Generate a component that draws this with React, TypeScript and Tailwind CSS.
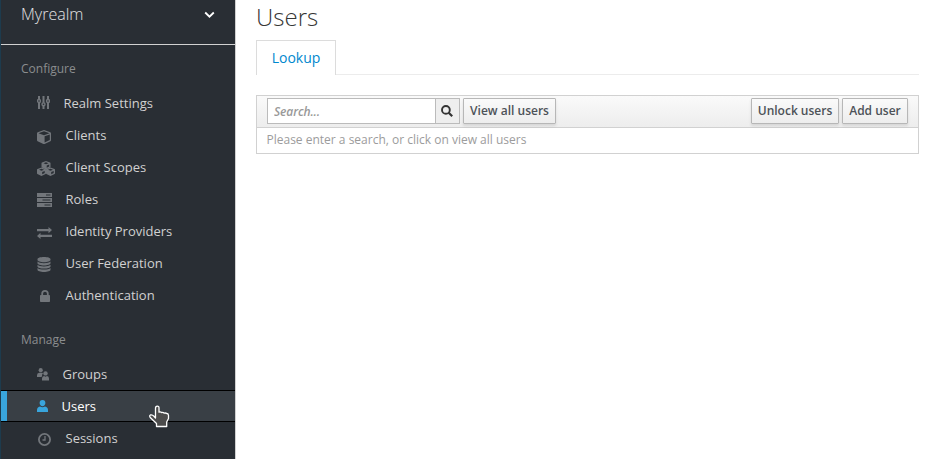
import type { ReactNode } from "react";

type Item = { label: string; icon: ReactNode; gap: string; active?: boolean };

const Icon = ({ w, h, className = "", children }: { w: number; h: number; className?: string; children: ReactNode }) => (
  <svg width={w} height={h} viewBox={`0 0 ${w} ${h}`} fill="currentColor" className={`shrink-0 ${className}`}>
    {children}
  </svg>
);

const Sliders = () => (
  <Icon w={13} h={13} className="mb-px">
    <g fill="none" stroke="currentColor" strokeWidth="1.4">
      <path d="M2 0v3M2 7v6M6.5 0v6M6.5 10v3M11 0v3M11 7v6" strokeWidth="2" />
      <circle cx="2" cy="5" r="1.500" />
      <circle cx="6.500" cy="8.300" r="1.500" />
      <circle cx="11" cy="5" r="1.500" />
    </g>
  </Icon>
);

const Cube = () => (
  <Icon w={14} h={14} className="mt-1">
    <path fillRule="evenodd" d="M7 0l6.3 2.3q.7.3.7 1v6.900q0 .6-.6 1L7.600 13.900q-.6.2-1.200 0L.6 11.200Q0 10.800 0 10.200V3.300q0-.7.7-1zM7 1.200L1.500 3.200 7 5.200l5.500-2zM7.600 6.300v6.200l5.200-2.600V4.400z" />
  </Icon>
);

const SmallCube = ({ x, y }: { x: number; y: number }) => (
  <path
    transform={`translate(${x} ${y})`}
    fillRule="evenodd"
    d="M4.500 0L8.500 1.600q.5.2.5.700v3.500q0 .5-.4.700L5 8.300q-.5.2-1 0L.4 6.500Q0 6.300 0 5.800V2.300q0-.5.5-.7zM4.500 1.200L2 2.200l2.500 1 2.500-1zM5.200 4.500v2.300l2.500-1.300V3.400z"
  />
);

const Cubes = () => (
  <Icon w={18} h={15} className="mt-0.5">
    <SmallCube x={4.5} y={0} />
    <SmallCube x={0} y={6.5} />
    <SmallCube x={9} y={6.5} />
  </Icon>
);

const Server = () => (
  <Icon w={15} h={14} className="mt-0.5">
    <path fillRule="evenodd" d="M0 0h15v4H0zM9 1.500v1h4.500v-1zM0 5h15v4H0zM5.500 6.500v1h8v-1zM0 10h15v4H0zM7.500 11.500v1h6v-1z" />
  </Icon>
);

const Exchange = () => (
  <Icon w={15} h={12} className="mt-1">
    <path d="M0 2h11.500V0L15 3.100 11.500 6.200V4.200H0zM15 7.800H3.500v-2L0 8.900 3.500 12v-2H15z" />
  </Icon>
);

const Database = () => (
  <Icon w={14} h={15} className="mt-0.5">
    <path d="M7 0c3.600 0 6.500.9 6.500 2.100v.9C13.500 4.200 10.600 5.200 7 5.200S.5 4.200.5 3v-.9C.5.900 3.400 0 7 0zM.5 4.500C1.700 5.700 4 6.200 7 6.200s5.300-.5 6.500-1.700v1.700C13.500 7.400 10.600 8.400 7 8.400S.5 7.400.5 6.200zM.5 7.700C1.700 8.900 4 9.400 7 9.400s5.300-.5 6.500-1.700v1.700c0 1.200-2.900 2.200-6.500 2.200S.5 10.600.5 9.400zM.5 10.900c1.200 1.200 3.500 1.700 6.500 1.700s5.300-.5 6.500-1.700v1.900C13.500 14.100 10.600 15 7 15S.5 14.100.5 12.800z" />
  </Icon>
);

const Lock = () => (
  <Icon w={10} h={12} className="mt-0.5 ml-[3px]">
    <path fillRule="evenodd" d="M1.300 5V3.500a3.700 3.500 0 0 1 7.400 0V5h.5q.8 0 .8.8v5.400q0 .8-.8.8H.8Q0 12 0 11.200V5.800Q0 5 .8 5zM3.100 5h3.800V3.500a1.900 1.800 0 0 0-3.800 0z" />
  </Icon>
);

const Groups = () => (
  <Icon w={12} h={13}>
    <circle cx="3.700" cy="2.200" r="2.100" />
    <path d="M0 9V7.200Q0 5 2.200 4.800h3L6 5.500Q4.600 6.800 5.100 8.200L4.300 9z" />
    <circle cx="8.500" cy="5.400" r="2.200" />
    <path d="M5 12.500v-2q0-2.200 2.100-2.500l1.400.8L10 8q2 .3 2 2.500v2z" />
  </Icon>
);

const User = () => (
  <Icon w={11} h={12} className="text-[#39a5dc]">
    <path d="M5.500 0a2.900 3 0 0 1 2.900 3C8.400 4.800 7 6.200 5.500 6.200S2.600 4.800 2.600 3A2.900 3 0 0 1 5.500 0zM0 12v-2q0-2.900 3-3.500 2.500 1.400 5 0 3 .6 3 3.500v2z" />
  </Icon>
);

const Clock = () => (
  <Icon w={13} h={13} className="mt-0.5 ml-px">
    <g fill="none" stroke="currentColor">
      <circle cx="6.500" cy="6.500" r="5.600" strokeWidth="1.800" />
      <path d="M7 3v4H4.500" strokeWidth="1.300" />
    </g>
  </Icon>
);

const configure: Item[] = [
  { label: "Realm Settings", icon: <Sliders />, gap: "w-[26.5px]" },
  { label: "Clients", icon: <Cube />, gap: "w-[28.5px]" },
  { label: "Client Scopes", icon: <Cubes />, gap: "w-[28.5px]" },
  { label: "Roles", icon: <Server />, gap: "w-[28.5px]" },
  { label: "Identity Providers", icon: <Exchange />, gap: "w-[28.5px]" },
  { label: "User Federation", icon: <Database />, gap: "w-[28.5px]" },
  { label: "Authentication", icon: <Lock />, gap: "w-[28.5px]" },
];

const manage: Item[] = [
  { label: "Groups", icon: <Groups />, gap: "w-[25.5px]" },
  { label: "Users", icon: <User />, gap: "w-[24.5px]", active: true },
  { label: "Sessions", icon: <Clock />, gap: "w-[28.5px]" },
];

const NavList = ({ items }: { items: Item[] }) => (
  <ul>
    {items.map((it) => (
      <li
        key={it.label}
        className={`flex h-8 items-center border-y text-[13px] ${
          it.active ? "border-black bg-[#393f45] text-white" : "border-transparent text-[#d1d1d1]"
        }`}
      >
        <span className={`h-full w-1.5 ${it.active ? "bg-[#39a5dc]" : ""}`} />
        <span className={`ml-[30px] flex items-center text-[#72767b] ${it.gap}`}>{it.icon}</span>
        <span className="pt-0.5">{it.label}</span>
      </li>
    ))}
  </ul>
);

const Button = ({ children, className }: { children: ReactNode; className: string }) => (
  <button
    className={`h-[26px] rounded-[1px] border border-[#b7b7b7] bg-linear-to-b from-[#fafafa] to-[#ededed] text-[12px] leading-[24px] font-semibold whitespace-nowrap text-[#4d5258] shadow-[0_2px_3px_rgba(0,0,0,0.1)] ${className}`}
  >
    {children}
  </button>
);

export default function App() {
  return (
    <div className="flex h-[459px] w-[927px] overflow-hidden bg-white font-['Open_Sans',sans-serif]">
      <aside className="relative w-[236px] shrink-0 border-r border-r-[#d1d1d1] border-l border-l-[#1d3b4d] bg-[#292e34]">
        <div className="flex h-[45px] items-start justify-between border-b border-[#d1d1d1] pr-5 pl-5">
          <span className="mt-1 text-[16px] leading-5 font-light text-[#e4e4e4]">Myrealm</span>
          <svg width="11" height="8" viewBox="0 0 11 8" className="mt-[11px]">
            <path d="M1.200 1.500l4.300 4.200 4.300-4.200" fill="none" stroke="white" strokeWidth="1.800" />
          </svg>
        </div>
        <h2 className="mt-[15px] mb-[9px] pl-5 text-[12px] leading-[18px] text-[#8b8d8f]">Configure</h2>
        <NavList items={configure} />
        <h2 className="mt-5 mb-[9px] pl-5 text-[12px] leading-[18px] text-[#8b8d8f]">Manage</h2>
        <NavList items={manage} />
        <svg width="22" height="23" viewBox="0 0 22 23" className="absolute top-[405px] left-[147px]">
          <path
            d="M7.500 13V3.200Q7.500 1.200 9.300 1.200T11 3.200V7.200Q12.300 6.400 13.700 7.600 15 7 16.300 8.200 17.500 7.700 18.700 8.500 20.300 8.500 20.500 10.300V13.500L18.700 17V21.500H8.500V18.500L2.200 12.500Q1 10.700 2.600 9.900 4.300 9.500 6 11.300z"
            fill="#4c4c4c"
            stroke="white"
            strokeWidth="1.300"
            strokeLinejoin="round"
          />
        </svg>
      </aside>
      <main className="ml-5 w-[663px] shrink-0">
        <h1 className="mt-0.5 h-[38px] text-[24px] leading-[30px] font-light text-[#363636]">Users</h1>
        <div className="flex h-[35px] border-b border-[#ececec]">
          <div className="-mb-px h-[35px] w-20 border border-b-0 border-[#dcdcdc] bg-white text-center text-[14px] leading-[34px] text-[#0088ce]">
            Lookup
          </div>
        </div>
        <section className="mt-5 h-[59px] border border-[#d1d1d1]">
          <div className="flex h-8 items-start border-b border-[#d1d1d1] bg-linear-to-b from-[#fafafa] to-[#ededed] pt-0.5 pr-[10px] pl-[10px]">
            <input
              placeholder="Search..."
              className="h-[26px] w-[169px] border border-[#bbb] bg-white px-1.5 text-[12px] font-semibold tracking-[-0.1px] italic placeholder:text-[#999]"
            />
            <div className="-ml-px flex h-[26px] w-[25px] items-center justify-center border border-[#bbb] bg-[#eee] pr-px">
              <svg width="12" height="12" viewBox="0 0 12 12" fill="none" stroke="#333">
                <circle cx="4.900" cy="4.900" r="3.900" strokeWidth="1.900" />
                <path d="M7.700 7.700L11.200 11.200" strokeWidth="2.200" />
              </svg>
            </div>
            <Button className="ml-[3px] w-[93px]">View all users</Button>
            <Button className="ml-auto w-[88px]">Unlock users</Button>
            <Button className="ml-[3px] w-[66px]">Add user</Button>
          </div>
          <p className="pl-[9.5px] text-[12px] leading-[23px] text-[#9c9c9c]">Please enter a search, or click on view all users</p>
        </section>
      </main>
    </div>
  );
}
